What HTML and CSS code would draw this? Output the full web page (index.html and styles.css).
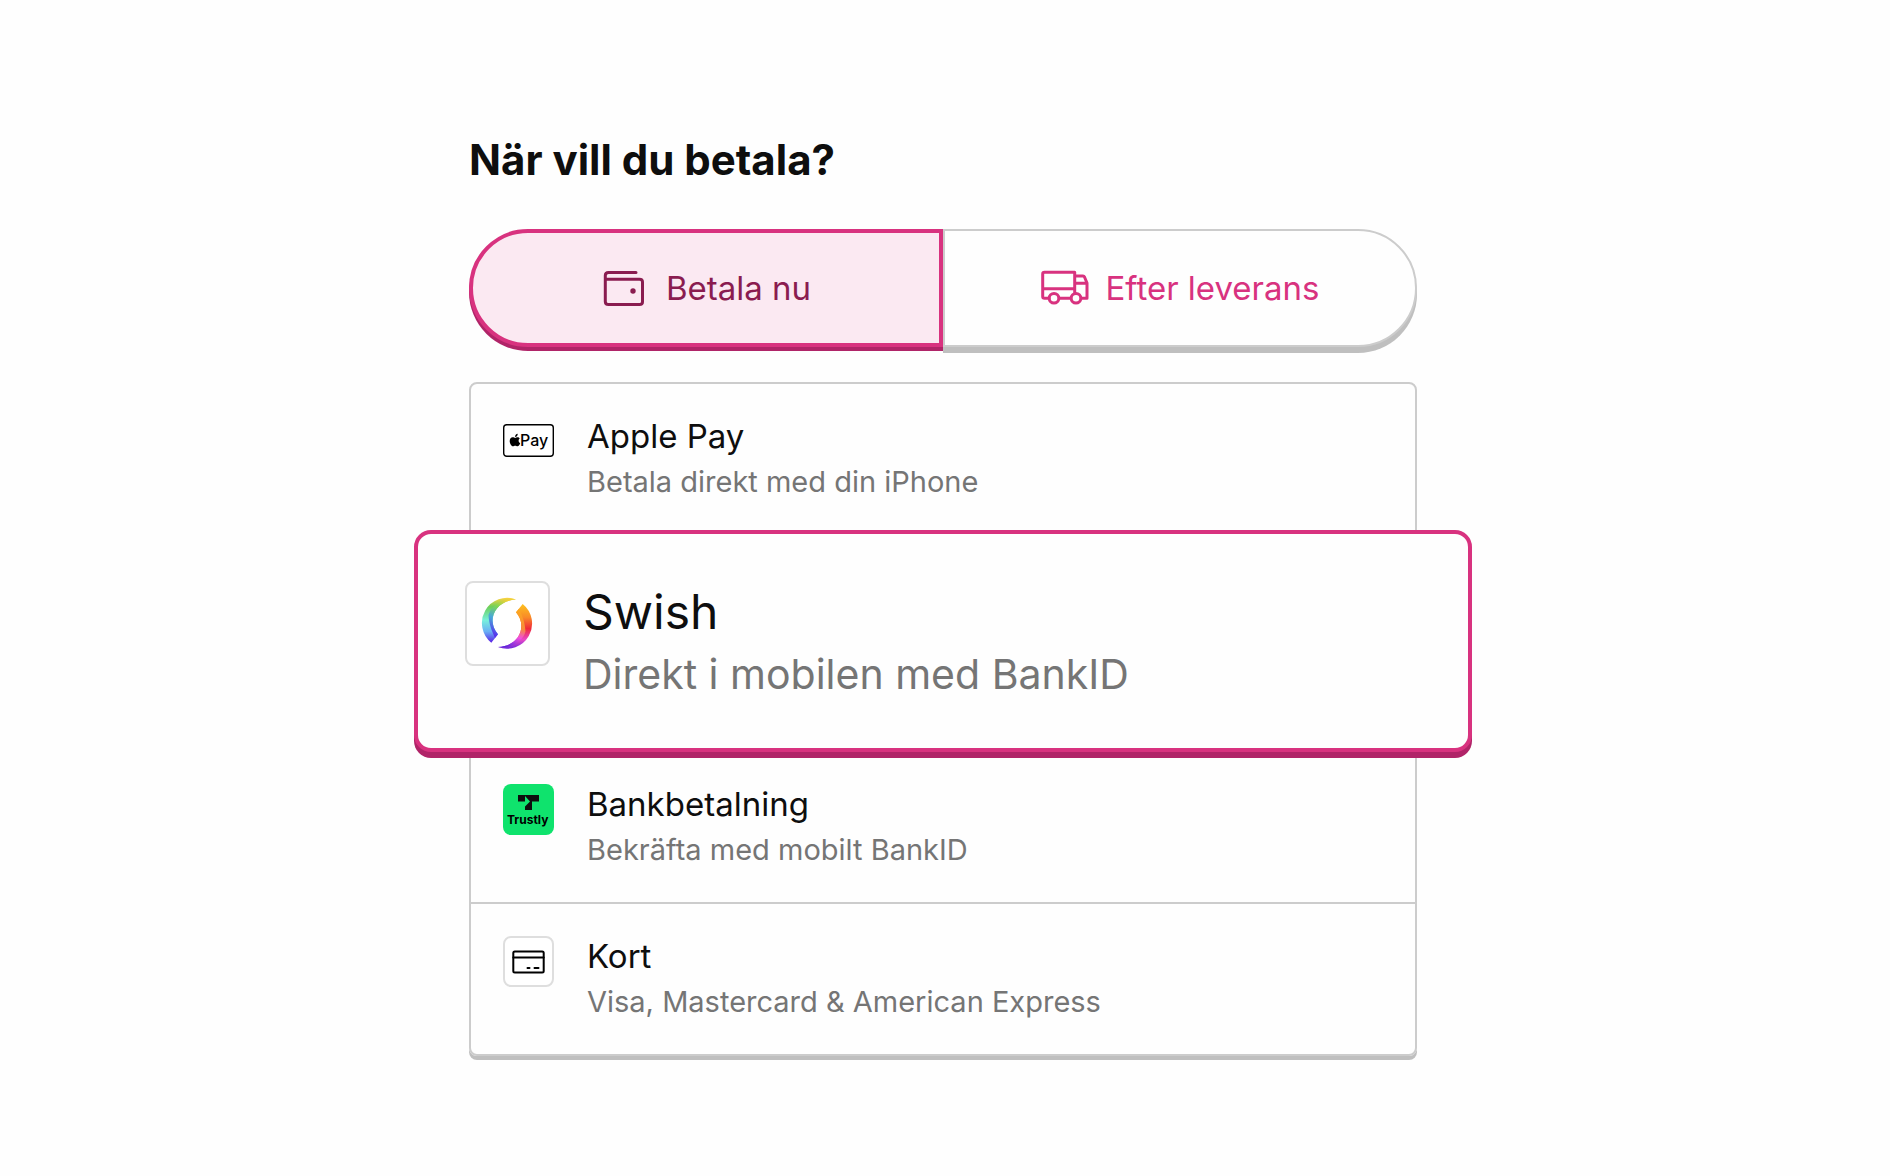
FILE: index.html
```html
<!DOCTYPE html>
<html lang="sv">
<head>
    <meta charset="UTF-8">
    <meta name="viewport" content="width=device-width, initial-scale=1.0">
    <title>När vill du betala?</title>
    <link rel="stylesheet" href="styles.css">
</head>
<body>
    <main class="checkout">
        <h1>När vill du betala?</h1>

        <div class="tabs">
            <button type="button" class="tab active" aria-pressed="true">
                <svg class="tab-icon" viewBox="0 0 48 48" aria-hidden="true">
                    <path d="M35 8.500H7.500Q4.300 8.500 4.300 11.500V37.500Q4.300 40.500 7.500 40.500H38.500Q41.500 40.500 41.500 38V18Q41.500 15.200 38.500 15.200H4.300"/>
                    <circle class="dot" cx="32" cy="27" r="2.700"/>
                </svg>
                <span>Betala nu</span>
            </button>
            <button type="button" class="tab" aria-pressed="false">
                <svg class="tab-icon" viewBox="0 0 48 48" aria-hidden="true">
                    <path d="M8 34.300H3.500Q1.700 34.300 1.700 32.500V10Q1.700 8.300 3.500 8.300H33.700V28.500M1.700 24.700H33.700M18.500 34.300H29.500M40.500 34.300H46V19L43.500 13Q43 12 42 12H33.700M33.700 19.300H45.500"/>
                    <circle cx="13" cy="34.300" r="4.800"/>
                    <circle cx="35" cy="34.300" r="4.800"/>
                </svg>
                <span>Efter leverans</span>
            </button>
        </div>

        <div class="methods" role="radiogroup" aria-label="Betalsätt">
            <label class="method">
                <input type="radio" name="method" value="applepay">
                <svg class="method-icon" viewBox="0 0 51 51" aria-hidden="true">
                    <rect x="0.700" y="8.700" width="49.600" height="31.600" rx="3" fill="#fff" stroke="#000" stroke-width="1.400"/>
                    <path d="M14.600 21.300C15.500 21.300 16.200 21.800 16.700 22.500C15 23.700 15.200 26.300 17.200 27.200C16.500 29 15.500 30.300 14.500 30.300C13.600 30.300 13.200 29.800 12.200 29.800C11.200 29.800 10.800 30.300 10 30.300C8.300 30.300 6.700 27.300 6.700 25C6.700 22.700 8 21.300 9.700 21.300C10.800 21.300 11.500 21.900 12.200 21.900C12.900 21.900 13.600 21.300 14.600 21.300ZM12.100 21C12 19.400 13.200 18 14.700 17.800C14.900 19.500 13.600 21 12.100 21Z"/>
                    <text class="apple-text" x="17" y="30">Pay</text>
                </svg>
                <span class="method-text">
                    <span class="method-title">Apple Pay</span>
                    <span class="method-desc">Betala direkt med din iPhone</span>
                </span>
            </label>

            <label class="method selected">
                <input type="radio" name="method" value="swish" checked>
                <svg class="method-icon" viewBox="0 0 85 85" aria-hidden="true">
                    <defs>
                        <linearGradient id="leftOuter" x1="0" y1="0" x2="0" y2="1">
                            <stop offset="0" stop-color="#ffd23e"/>
                            <stop offset="0.200" stop-color="#6ccf5a"/>
                            <stop offset="0.500" stop-color="#78f0dc"/>
                            <stop offset="0.750" stop-color="#6ab0f5"/>
                            <stop offset="1" stop-color="#5a1ee6"/>
                        </linearGradient>
                        <linearGradient id="leftInner" x1="0.600" y1="0" x2="0.300" y2="1">
                            <stop offset="0" stop-color="#f5cf35"/>
                            <stop offset="0.250" stop-color="#7dd655"/>
                            <stop offset="0.550" stop-color="#48a8d8"/>
                            <stop offset="1" stop-color="#5a28ee"/>
                        </linearGradient>
                        <linearGradient id="rightOuter" x1="0" y1="0" x2="0" y2="1">
                            <stop offset="0" stop-color="#fdc21e"/>
                            <stop offset="0.300" stop-color="#f98a28"/>
                            <stop offset="0.550" stop-color="#f02a38"/>
                            <stop offset="0.800" stop-color="#e848c8"/>
                            <stop offset="1" stop-color="#6a28dc"/>
                        </linearGradient>
                        <linearGradient id="rightInner" x1="0.600" y1="0" x2="0.400" y2="1">
                            <stop offset="0" stop-color="#fda81e"/>
                            <stop offset="0.450" stop-color="#f78a3a"/>
                            <stop offset="0.700" stop-color="#f04ee0"/>
                            <stop offset="1" stop-color="#5a28dc"/>
                        </linearGradient>
                    </defs>
                    <rect x="1" y="1" width="83" height="83" rx="7" fill="#fff" stroke="#dedede" stroke-width="2"/>
                    <path fill="url(#leftOuter)" d="M51 18.500A25.200 25.200 0 0 0 26.300 61.700L33 53.300C22 41 28 20 51 18.500Z"/>
                    <path fill="url(#leftInner)" d="M51 18.500C38 17 26 24 23.500 34C24 44 27 50 30 56.900L33 53.300C22 41 28 20 51 18.500Z"/>
                    <path fill="url(#rightOuter)" d="M33 66.100A25.200 25.200 0 0 0 57.700 22.900L51 31.300C62 43.600 56 64.600 33 66.100Z"/>
                    <path fill="url(#rightInner)" d="M33 66.100C46 67.600 58 60.600 60.500 50.600C60 40.600 57 34.600 54 27.700L51 31.300C62 43.600 56 64.600 33 66.100Z"/>
                </svg>
                <span class="method-text">
                    <span class="method-title">Swish</span>
                    <span class="method-desc">Direkt i mobilen med BankID</span>
                </span>
            </label>

            <label class="method">
                <input type="radio" name="method" value="trustly">
                <svg class="method-icon" viewBox="0 0 51 51" aria-hidden="true">
                    <rect width="51" height="51" rx="8" fill="#0fe36d"/>
                    <path fill="#0e0e0e" d="M15 11H36V17.500H29V26H22V22.500L27 17.500L22 12V17.500H15Z"/>
                    <text class="trustly-text" x="4" y="40">Trustly</text>
                </svg>
                <span class="method-text">
                    <span class="method-title">Bankbetalning</span>
                    <span class="method-desc">Bekräfta med mobilt BankID</span>
                </span>
            </label>

            <label class="method">
                <input type="radio" name="method" value="card">
                <svg class="method-icon" viewBox="0 0 51 51" aria-hidden="true">
                    <rect x="1" y="1" width="49" height="49" rx="7" fill="#fff" stroke="#dedede" stroke-width="2"/>
                    <g fill="none" stroke="#000" stroke-width="2" stroke-linecap="round">
                        <rect x="10.300" y="15.500" width="30.400" height="21" rx="1.500"/>
                        <path d="M10.300 21.500H40.700M24.500 32H26.500M31.500 32H35.500"/>
                    </g>
                </svg>
                <span class="method-text">
                    <span class="method-title">Kort</span>
                    <span class="method-desc">Visa, Mastercard &amp; American Express</span>
                </span>
            </label>
        </div>
    </main>
</body>
</html>
```
FILE: styles.css
```css
/* Reset */
* {
    margin: 0;
    padding: 0;
    box-sizing: border-box;
}

body {
    font-family: 'Inter', sans-serif;
    background-color: #fefefe;
    color: #0e0e0e;
    padding: 132px 24px 116px 20px;
}

.checkout {
    max-width: 948px;
    margin: 0 auto;
}

h1 {
    font-size: 42px;
    line-height: 56px;
    font-weight: 700;
    margin-bottom: 41px;
}

/* Tabs */
.tabs {
    display: flex;
    margin-bottom: 35px;
}

.tab {
    width: 50%;
    display: flex;
    align-items: center;
    justify-content: center;
    gap: 17px;
    height: 118px;
    font-family: inherit;
    font-size: 33px;
    color: #d8327f;
    background-color: #fefefe;
    border: 2px solid #ccc;
    border-radius: 0 59px 59px 0;
    box-shadow: 0 6px 0 #bfbfbf;
    cursor: pointer;
}

.tab.active {
    color: #8a1c50;
    background-color: #fbe9f2;
    border: 4px solid #d8327f;
    border-radius: 59px 0 0 59px;
    box-shadow: 0 4px 0 #b02468;
}

.tab-icon {
    width: 48px;
    height: 48px;
    fill: none;
    stroke: currentColor;
    stroke-width: 3;
    stroke-linecap: round;
    stroke-linejoin: round;
}

.tab-icon .dot {
    fill: currentColor;
    stroke: none;
}

/* Payment methods */
.methods {
    border: 2px solid #ccc;
    border-radius: 8px;
    box-shadow: 0 4px 0 #bfbfbf;
}

.method {
    position: relative;
    display: flex;
    align-items: flex-start;
    gap: 33px;
    padding: 32px;
    cursor: pointer;
}

.method + .method {
    border-top: 2px solid #ccc;
}

.method input {
    position: absolute;
    opacity: 0;
}

.method-icon {
    flex: none;
    width: 51px;
    height: 51px;
}

.method-text {
    display: flex;
    flex-direction: column;
    gap: 6px;
}

.method-title {
    font-size: 33px;
    line-height: 40px;
}

.method-desc {
    font-size: 29px;
    line-height: 40px;
    color: #757575;
}

/* The chosen method is enlarged and reaches outside the list */
.method.selected {
    z-index: 1;
    margin: -4px -57px 0;
    padding: 47px 47px 49px;
    background-color: #fefefe;
    border: 4px solid #d8327f;
    border-radius: 17px;
    box-shadow: 0 6px 0 #b02468;
}

.method.selected + .method {
    border-top: none;
}

.selected .method-icon {
    width: 85px;
    height: 85px;
}

.selected .method-title {
    font-size: 48px;
    line-height: 62px;
}

.selected .method-desc {
    font-size: 41px;
    line-height: 50px;
}

/* Logo texts */
.apple-text {
    font-size: 16px;
    font-weight: 500;
}

.trustly-text {
    font-size: 12px;
    font-weight: 700;
}

@media (max-width: 1080px) {
    .tab {
        font-size: 24px;
    }

    .method.selected {
        margin: -4px -16px 0;
        padding: 32px;
    }
}
```
